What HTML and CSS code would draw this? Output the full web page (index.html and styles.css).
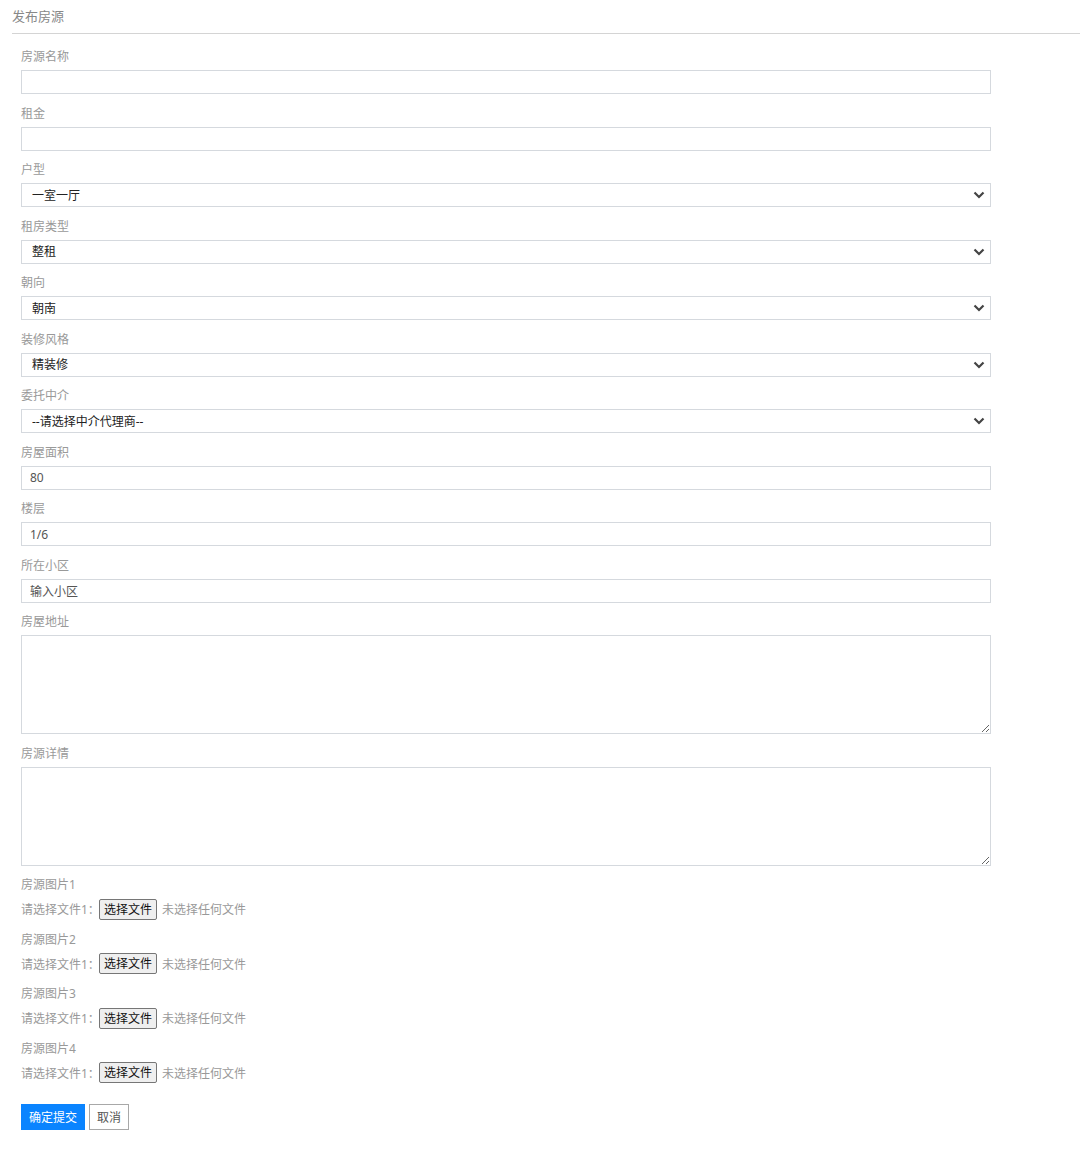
FILE: index.html
```html
<!DOCTYPE html>
<html lang="zh-CN">
<head>
    <meta charset="UTF-8">
    <meta name="viewport" content="width=device-width, initial-scale=1.0">
    <title>发布房源</title>
    <link rel="stylesheet" href="styles.css">
</head>
<body>
    <div class="page-title">发布房源</div>

    <form class="house-form">
        <div class="form-group">
            <label>房源名称</label>
            <input type="text" class="form-control">
        </div>
        <div class="form-group">
            <label>租金</label>
            <input type="text" class="form-control">
        </div>
        <div class="form-group">
            <label>户型</label>
            <div class="select-wrap">
                <select class="form-control">
                    <option>一室一厅</option>
                </select>
                <svg class="chevron" width="12" height="8" viewBox="0 0 12 8"><path d="M1.5 1.5 L6 6 L10.5 1.5" fill="none" stroke="#444" stroke-width="2.2"/></svg>
            </div>
        </div>
        <div class="form-group">
            <label>租房类型</label>
            <div class="select-wrap">
                <select class="form-control">
                    <option>整租</option>
                </select>
                <svg class="chevron" width="12" height="8" viewBox="0 0 12 8"><path d="M1.5 1.5 L6 6 L10.5 1.5" fill="none" stroke="#444" stroke-width="2.2"/></svg>
            </div>
        </div>
        <div class="form-group">
            <label>朝向</label>
            <div class="select-wrap">
                <select class="form-control">
                    <option>朝南</option>
                </select>
                <svg class="chevron" width="12" height="8" viewBox="0 0 12 8"><path d="M1.5 1.5 L6 6 L10.5 1.5" fill="none" stroke="#444" stroke-width="2.2"/></svg>
            </div>
        </div>
        <div class="form-group">
            <label>装修风格</label>
            <div class="select-wrap">
                <select class="form-control">
                    <option>精装修</option>
                </select>
                <svg class="chevron" width="12" height="8" viewBox="0 0 12 8"><path d="M1.5 1.5 L6 6 L10.5 1.5" fill="none" stroke="#444" stroke-width="2.2"/></svg>
            </div>
        </div>
        <div class="form-group">
            <label>委托中介</label>
            <div class="select-wrap">
                <select class="form-control">
                    <option>--请选择中介代理商--</option>
                </select>
                <svg class="chevron" width="12" height="8" viewBox="0 0 12 8"><path d="M1.5 1.5 L6 6 L10.5 1.5" fill="none" stroke="#444" stroke-width="2.2"/></svg>
            </div>
        </div>
        <div class="form-group">
            <label>房屋面积</label>
            <input type="text" class="form-control" value="80">
        </div>
        <div class="form-group">
            <label>楼层</label>
            <input type="text" class="form-control" value="1/6">
        </div>
        <div class="form-group">
            <label>所在小区</label>
            <input type="text" class="form-control" value="输入小区">
        </div>
        <div class="form-group">
            <label>房屋地址</label>
            <textarea class="form-control"></textarea>
        </div>
        <div class="form-group">
            <label>房源详情</label>
            <textarea class="form-control"></textarea>
        </div>

        <div class="form-group">
            <label>房源图片1</label>
            <div class="file-row">请选择文件1：<span class="file-btn">选择文件</span><span class="file-name">未选择任何文件</span></div>
        </div>
        <div class="form-group">
            <label>房源图片2</label>
            <div class="file-row">请选择文件1：<span class="file-btn">选择文件</span><span class="file-name">未选择任何文件</span></div>
        </div>
        <div class="form-group">
            <label>房源图片3</label>
            <div class="file-row">请选择文件1：<span class="file-btn">选择文件</span><span class="file-name">未选择任何文件</span></div>
        </div>
        <div class="form-group">
            <label>房源图片4</label>
            <div class="file-row">请选择文件1：<span class="file-btn">选择文件</span><span class="file-name">未选择任何文件</span></div>
        </div>

        <div class="actions">
            <button type="submit" class="btn btn-primary">确定提交</button>
            <button type="button" class="btn btn-default">取消</button>
        </div>
    </form>
</body>
</html>
```

FILE: styles.css
```css
body {
    margin: 0;
    font-family: "Noto Sans", "Noto Sans CJK SC", sans-serif;
    font-size: 12px;
    color: #999;
    background: #fff;
}
.page-title {
    margin-left: 12px;
    height: 33px;
    line-height: 32px;
    font-size: 13px;
    color: #888;
    border-bottom: 1px solid #d4d4d4;
}
.house-form {
    width: 970px;
    padding: 14px 0 0 21px;
}
.form-group {
    margin-bottom: 10.5px;
}
.form-group label {
    display: block;
    line-height: 18px;
    margin-bottom: 4px;
    color: #999;
}
.form-control {
    display: block;
    box-sizing: border-box;
    width: 100%;
    height: 24px;
    margin: 0;
    padding: 0 8px;
    border: 1px solid #d5d9de;
    border-radius: 0;
    font-family: inherit;
    font-size: 12px;
    color: #555;
    background: #fff;
    outline: none;
}
select.form-control {
    appearance: none;
    -webkit-appearance: none;
    padding-left: 10px;
    color: #222;
}
textarea.form-control {
    height: 99px;
    padding: 4px 8px;
}
.select-wrap {
    position: relative;
}
.chevron {
    position: absolute;
    right: 6px;
    top: 8px;
    pointer-events: none;
}
.file-row {
    display: flex;
    align-items: center;
    height: 22px;
    color: #999;
}
.file-btn {
    display: inline-block;
    box-sizing: border-box;
    height: 21px;
    line-height: 19px;
    padding: 0 4px;
    margin-left: -1px;
    margin-right: 5px;
    border: 1px solid #767676;
    border-radius: 2px;
    background: #efefef;
    color: #111;
}
.file-name {
    color: #999;
}
.actions {
    display: flex;
    gap: 4px;
    margin-top: 20px;
}
.btn {
    box-sizing: border-box;
    height: 26px;
    padding: 0 7px;
    font-family: inherit;
    font-size: 12px;
    border-radius: 0;
    cursor: pointer;
}
.btn-primary {
    background: #0a84ff;
    border: 1px solid #0a84ff;
    color: #fff;
}
.btn-default {
    background: #fff;
    border: 1px solid #a8a8a8;
    color: #555;
}
```
